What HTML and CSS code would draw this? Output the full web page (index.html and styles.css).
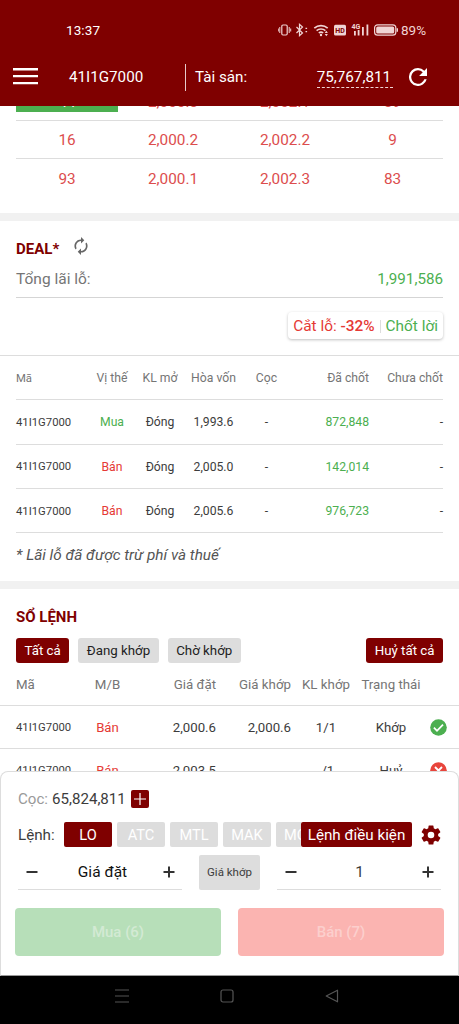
FILE: index.html
```html
<!DOCTYPE html>
<html lang="vi">

<head>
    <meta charset="UTF-8">
    <meta name="viewport" content="width=device-width, initial-scale=1.0">
    <title>41I1G7000</title>
    <link rel="stylesheet" href="styles.css">
</head>

<body>
    <header class="top">
        <div class="status">
            <span class="clock">13:37</span>
            <svg class="status-icons" width="120" height="16" viewBox="0 0 120 16">
                <g fill="none" stroke="#f0d4d4" stroke-width="1.2">
                    <rect x="3.8" y="3" width="5.4" height="10" rx="1.2" />
                    <path d="M1.8 5v6M11.2 5v6M.3 6.5v3M12.7 6.5v3" stroke-width="1" />
                    <path d="M18.5 5l6 6-3 2.7V2.3l3 2.7-6 6" />
                    <path d="M27.5 6.3h1.6M27.5 9.7h1.6" />
                    <path d="M36.3 6.2a10 10 0 0 1 13.4 0M38.6 8.7a6.6 6.6 0 0 1 8.8 0M40.8 11a3.4 3.4 0 0 1 4.4 0" stroke-width="1.6" />
                    <rect x="96.6" y="2.8" width="21.2" height="10.4" rx="3" />
                    <path d="M119.3 6.3v3.4" stroke-width="1.4" />
                </g>
                <g fill="#f0d4d4">
                    <circle cx="43" cy="13" r="1.2" />
                    <path d="M46.7 11l1.6-2.3 1.6 2.3zM46.7 12l1.6 2.3 1.6-2.3z" />
                    <rect x="56" y="2.8" width="12" height="10.6" rx="1.5" />
                    <rect x="76" y="9" width="1.8" height="4.5" />
                    <rect x="79.7" y="8" width="1.8" height="5.5" />
                    <rect x="84" y="5" width="1.8" height="8.5" />
                    <rect x="88.5" y="2.5" width="1.8" height="11" />
                    <rect x="98.2" y="4.4" width="18" height="7.2" rx="1.6" />
                </g>
                <text class="net" x="73.5" y="6.6">4G</text>
                <text class="hd" x="57.2" y="10.7">HD</text>
            </svg>
            <span class="percent">89%</span>
        </div>
        <div class="bar">
            <svg width="25" height="18" viewBox="0 0 25 18">
                <path d="M0 1.3h25M0 8.1h25M0 15.1h25" stroke="#fff" stroke-width="2.4" />
            </svg>
            <span class="symbol">41I1G7000</span>
            <span class="asset">Tài sản:</span>
            <span class="money">75,767,811</span>
            <svg class="reload" width="18" height="18" viewBox="4 4 16 16">
                <path fill="#fff" d="M17.65 6.35A7.96 7.96 0 0 0 12 4a8 8 0 1 0 7.73 10h-2.08A6 6 0 1 1 12 6c1.66 0 3.14.69 4.22 1.78L13 11h7V4z" />
            </svg>
        </div>
    </header>

    <main class="content">
        <section class="book">
            <div class="book-row"><span class="best">44</span><span>2,000.3</span><span>2,002.1</span><span>39</span></div>
            <div class="book-row"><span>16</span><span>2,000.2</span><span>2,002.2</span><span>9</span></div>
            <div class="book-row"><span>93</span><span>2,000.1</span><span>2,002.3</span><span>83</span></div>
        </section>

        <section class="deal">
            <h2>DEAL*
                <svg class="sync" width="14" height="18" viewBox="4 1 16 22">
                    <path fill="#666" d="M12 4V1L8 5l4 4V6a6 6 0 0 1 5.3 8.8l1.46 1.46A8 8 0 0 0 12 4zm0 14a6 6 0 0 1-5.3-8.8L5.24 7.74A8 8 0 0 0 12 20v3l4-4-4-4z" transform="matrix(-1 0 0 1 24 0)" />
                </svg>
            </h2>
            <div class="total"><span class="label">Tổng lãi lỗ:</span><span class="up">1,991,586</span></div>
            <div class="stop">
                <div class="stop-box"><span class="down">Cắt lỗ: <b>-32%</b></span><i></i><span class="up">Chốt lời</span></div>
            </div>
            <div class="deal-table">
                <div class="deal-row head"><span>Mã</span><span>Vị thế</span><span>KL mở</span><span>Hòa vốn</span><span>Cọc</span><span>Đã chốt</span><span>Chưa chốt</span></div>
                <div class="deal-row"><span>41I1G7000</span><span class="up">Mua</span><span>Đóng</span><span>1,993.6</span><span>-</span><span class="up">872,848</span><span>-</span></div>
                <div class="deal-row"><span>41I1G7000</span><span class="down">Bán</span><span>Đóng</span><span>2,005.0</span><span>-</span><span class="up">142,014</span><span>-</span></div>
                <div class="deal-row"><span>41I1G7000</span><span class="down">Bán</span><span>Đóng</span><span>2,005.6</span><span>-</span><span class="up">976,723</span><span>-</span></div>
            </div>
            <p class="note">* Lãi lỗ đã được trừ phí và thuế</p>
        </section>

        <section class="orders">
            <h2>SỔ LỆNH</h2>
            <div class="filter">
                <span class="btn active">Tất cả</span>
                <span class="btn">Đang khớp</span>
                <span class="btn">Chờ khớp</span>
                <span class="btn active cancel">Huỷ tất cả</span>
            </div>
            <div class="order-row head"><span>Mã</span><span>M/B</span><span>Giá đặt</span><span>Giá khớp</span><span>KL khớp</span><span>Trạng thái</span></div>
            <div class="order-row">
                <span>41I1G7000</span><span class="down">Bán</span><span>2,000.6</span><span>2,000.6</span><span>1/1</span><span>Khớp</span>
                <svg width="17" height="17" viewBox="0 0 17 17">
                    <circle cx="8.5" cy="8.5" r="8.3" fill="#4caf50" />
                    <path d="M3.9 8.7l3.1 3.1 6-6.1" fill="none" stroke="#fff" stroke-width="1.8" />
                </svg>
            </div>
            <div class="order-row">
                <span>41I1G7000</span><span class="down">Bán</span><span>2,003.5</span><span class="none">-</span><span>-/1</span><span>Huỷ</span>
                <svg width="17" height="17" viewBox="0 0 17 17">
                    <circle cx="8.5" cy="8.5" r="8.3" fill="#e8453c" />
                    <path d="M5 5l7 7M12 5l-7 7" fill="none" stroke="#fff" stroke-width="1.8" />
                </svg>
            </div>
        </section>
    </main>

    <footer class="panel">
        <div class="deposit">
            <span class="label">Cọc:</span><span>65,824,811</span>
            <svg width="18" height="18" viewBox="0 0 18 18">
                <rect width="18" height="18" rx="2" fill="#7f0000" />
                <path d="M9 3v12M3 9h12" stroke="#fff" stroke-width="1.2" />
            </svg>
        </div>
        <div class="types">
            <span class="label">Lệnh:</span>
            <div class="chips">
                <span class="chip active">LO</span>
                <span class="chip">ATC</span>
                <span class="chip">MTL</span>
                <span class="chip">MAK</span>
                <span class="chip">MOK</span>
            </div>
            <span class="condition">Lệnh điều kiện</span>
            <svg class="gear" width="20" height="20" viewBox="2 2 20 20">
                <path fill="#7f0000" d="M19.14 12.94c.04-.3.06-.61.06-.94s-.02-.64-.07-.94l2.03-1.58a.49.49 0 0 0 .12-.61l-1.92-3.32a.49.49 0 0 0-.59-.22l-2.39.96a7 7 0 0 0-1.62-.94l-.36-2.54a.48.48 0 0 0-.48-.41h-3.84a.48.48 0 0 0-.47.41l-.36 2.54c-.59.24-1.13.57-1.62.94l-2.39-.96a.48.48 0 0 0-.59.22L2.74 8.87a.48.48 0 0 0 .12.61l2.03 1.58c-.05.3-.09.63-.09.94s.02.64.07.94l-2.03 1.58a.49.49 0 0 0-.12.61l1.92 3.32c.12.22.37.29.59.22l2.39-.96c.5.38 1.03.7 1.62.94l.36 2.54c.05.24.24.41.48.41h3.84c.24 0 .44-.17.47-.41l.36-2.54a7 7 0 0 0 1.62-.94l2.39.96c.22.08.47 0 .59-.22l1.92-3.32a.48.48 0 0 0-.12-.61zM12 15.3a3.3 3.3 0 1 1 0-6.6 3.3 3.3 0 0 1 0 6.6z" />
            </svg>
        </div>
        <div class="inputs">
            <div class="stepper">
                <svg width="12" height="12" viewBox="0 0 12 12"><path d="M.5 6h11" stroke="#333" stroke-width="2" /></svg>
                <span class="price">Giá đặt</span>
                <svg width="12" height="12" viewBox="0 0 12 12"><path d="M.5 6h11M6 .5v11" stroke="#333" stroke-width="2" /></svg>
            </div>
            <span class="match">Giá khớp</span>
            <div class="stepper">
                <svg width="12" height="12" viewBox="0 0 12 12"><path d="M.5 6h11" stroke="#333" stroke-width="2" /></svg>
                <span>1</span>
                <svg width="12" height="12" viewBox="0 0 12 12"><path d="M.5 6h11M6 .5v11" stroke="#333" stroke-width="2" /></svg>
            </div>
        </div>
        <div class="actions">
            <span class="buy">Mua (6)</span>
            <span class="sell">Bán (7)</span>
        </div>
    </footer>

    <nav class="keys">
        <svg width="14" height="14" viewBox="0 0 14 14"><path d="M0 1h14M0 7h14M0 13h14" /></svg>
        <svg width="14" height="14" viewBox="0 0 14 14"><rect x="1" y="1" width="12" height="12" rx="2" /></svg>
        <svg width="14" height="14" viewBox="0 0 14 14"><path d="M12.5 1.2v11.6L1.2 7z" stroke-linejoin="round" /></svg>
    </nav>
</body>

</html>
```
FILE: styles.css
```css
* {
    margin: 0;
    padding: 0;
    box-sizing: border-box;
}

body {
    width: 459px;
    height: 1024px;
    display: flex;
    flex-direction: column;
    overflow: hidden;
    background: #fff;
    color: #3c3c3c;
    font-family: Roboto, "Noto Sans", sans-serif;
    font-size: 14px;
    white-space: nowrap;
}

svg {
    display: block;
    flex-shrink: 0;
}

/* header */
.top {
    height: 106px;
    background: #7f0000;
    color: #fff;
}

.status {
    height: 48px;
    padding: 11px 31px 0 66px;
    display: flex;
    align-items: center;
}

.clock {
    font-size: 13.5px;
    letter-spacing: 0.1px;
}

.status-icons {
    margin-left: auto;
}

.status-icons text {
    font-weight: 700;
}

.net {
    font-size: 7px;
    fill: #f0d4d4;
}

.hd {
    font-size: 7px;
    fill: #7f0000;
}

.percent {
    margin-left: 3px;
    width: 27px;
    font-size: 13.5px;
    color: #f0d4d4;
}

.bar {
    height: 58px;
    padding: 0 32px 0 13px;
    display: flex;
    align-items: center;
    font-size: 15.2px;
}

.symbol {
    width: 116px;
    margin-left: 31px;
}

.asset {
    height: 27px;
    line-height: 27px;
    padding-left: 9px;
    border-left: 1px solid #e6caca;
}

.money {
    margin-left: auto;
    padding-right: 2px;
    line-height: 20px;
    border-bottom: 1px dashed #f0d4d4;
}

.reload {
    margin-left: 16px;
}

/* scrolled content */
.content {
    height: 669px;
    overflow: hidden;
}

.up {
    color: #4caf50;
}

.down {
    color: #e53935;
}

h2 {
    display: flex;
    align-items: center;
    color: #7f0000;
    font-size: 15px;
    font-weight: 700;
}

.book {
    margin-top: -23px;
    height: 138px;
    padding: 0 16px;
    border-bottom: 8px solid #f1f1f1;
}

.book-row {
    display: grid;
    grid-template-columns: 102px 110px 114px 101px;
    align-items: center;
    height: 38px;
    padding-top: 1px;
    border-bottom: 1px solid #ddd;
    color: #dc4d4d;
    font-size: 15.3px;
    text-align: center;
}

.book-row:last-child {
    border-bottom: 0;
}

.best {
    height: 20px;
    line-height: 20px;
    background: #4caf50;
    color: #fff;
}

.deal {
    height: 368px;
    padding: 16px 16px 0;
    border-bottom: 8px solid #f1f1f1;
}

.deal h2 {
    height: 24px;
}

.sync {
    margin: -6px 0 0 15px;
}

.total {
    display: flex;
    justify-content: space-between;
    height: 37px;
    line-height: 37px;
    border-bottom: 1px solid #d5d5d5;
    font-size: 15.2px;
}

.total .label {
    color: #757575;
    font-size: 15.5px;
}

.stop {
    display: flex;
    justify-content: flex-end;
    height: 58px;
    margin: 0 -16px;
    padding: 14px 16px 0;
    border-bottom: 1px solid #ddd;
}

.stop-box {
    display: flex;
    align-items: center;
    height: 27px;
    padding: 0 5px;
    border-radius: 4px;
    box-shadow: 0 1px 3px rgba(0, 0, 0, 0.25);
    font-size: 15.4px;
}

.stop-box b {
    font-weight: 500;
}

.stop-box i {
    width: 1px;
    height: 13px;
    margin: 2px 5px 0;
    background: #ddd;
}

.deal-row {
    display: grid;
    grid-template-columns: 70px 52px 44px 63px 43px 81px 74px;
    align-items: center;
    height: 44.3px;
    padding-top: 1px;
    border-bottom: 1px solid #ddd;
    font-size: 12.2px;
    text-align: center;
}

.deal-row span:first-child {
    font-size: 11.3px;
    text-align: left;
}

.deal-row span:nth-child(n+6) {
    text-align: right;
}

.deal-row.head {
    color: #757575;
}

.note {
    line-height: 45px;
    color: #555;
    font-size: 15.3px;
    font-style: italic;
}

.orders {
    padding: 16px 16px 0;
}

.orders h2 {
    height: 24px;
}

.filter {
    display: flex;
    gap: 9px;
    margin-top: 9px;
}

.btn {
    height: 25px;
    line-height: 25px;
    padding: 0 8.5px;
    border-radius: 3px;
    background: #ddd;
    color: #222;
    font-size: 13.3px;
}

.btn.active {
    background: #7f0000;
    color: #fff;
}

.cancel {
    margin-left: auto;
}

.order-row {
    display: grid;
    grid-template-columns: 70px 43px 87px 75px 70px 60px 26px;
    align-items: center;
    justify-items: center;
    height: 43px;
    margin: 0 -16px;
    padding: 0 12px 0 16px;
    border-bottom: 1px solid #ddd;
    font-size: 13.2px;
}

.order-row span:first-child {
    justify-self: start;
    font-size: 11.3px;
}

.order-row span:nth-child(3),
.order-row span:nth-child(4) {
    justify-self: end;
}

.order-row .none {
    margin-right: 22px;
}

.order-row svg {
    justify-self: end;
}

.order-row.head,
.order-row.head span:first-child {
    color: #757575;
    font-size: 13.3px;
}

/* order form */
.panel {
    position: relative;
    height: 205px;
    margin-top: -4px;
    padding: 16px 14px 0 14px;
    border: 1px solid #ddd;
    border-bottom-color: #999;
    border-radius: 8px 8px 0 0;
    background: #fff;
}

.deposit {
    display: flex;
    align-items: center;
    height: 22px;
    padding-left: 3px;
    font-size: 15.1px;
}

.deposit .label {
    margin-right: 4px;
    color: #999;
}

.deposit svg {
    margin-left: 5px;
}

.types {
    display: flex;
    align-items: center;
    height: 25px;
    margin-top: 12px;
    padding-left: 3px;
    font-size: 15.2px;
}

.types .label {
    width: 46px;
}

.chips {
    display: flex;
    gap: 5px;
    width: 237px;
    overflow: hidden;
}

.chip {
    flex: 0 0 48px;
    height: 25px;
    line-height: 26px;
    border-radius: 2px;
    background: #ddd;
    color: #fff;
    font-size: 14.6px;
    text-align: center;
}

.chip.active {
    background: #7f0000;
}

.condition {
    width: 111px;
    height: 25px;
    line-height: 26px;
    border-radius: 2px;
    background: #7f0000;
    color: #fff;
    text-align: center;
}

.gear {
    margin-left: 9px;
}

.inputs {
    display: flex;
    justify-content: space-between;
    height: 35px;
    margin: 8px 3px 0 3px;
}

.stepper {
    display: flex;
    align-items: center;
    justify-content: space-between;
    width: 164px;
    padding: 0 7px 0 8px;
    border-bottom: 1px solid #ddd;
    font-size: 15.5px;
}

.price {
    margin-left: 4px;
    color: #111;
}

.match {
    width: 61px;
    line-height: 35px;
    border-radius: 2px;
    background: #ddd;
    font-size: 11.5px;
    text-align: center;
}

.actions {
    display: flex;
    justify-content: space-between;
    margin-top: 18px;
}

.buy,
.sell {
    width: 206px;
    line-height: 48px;
    border-radius: 4px;
    font-size: 15px;
    font-weight: 500;
    text-align: center;
}

.buy {
    background: #b7dfb9;
    color: #d3ead4;
}

.sell {
    background: #fbb4b1;
    color: #fccfcd;
}

/* system buttons */
.keys {
    display: flex;
    justify-content: space-between;
    height: 48px;
    padding: 13px 120px 0 115px;
    background: #000;
}

.keys svg {
    fill: none;
    stroke: #555;
    stroke-width: 1.2;
}
```
